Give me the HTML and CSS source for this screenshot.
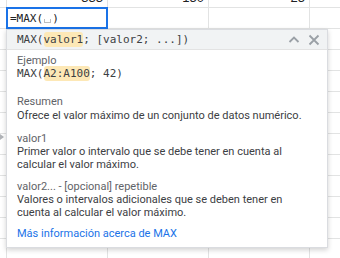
FILE: index.html
```html
<!DOCTYPE html>
<html lang="es">
<head>
<meta charset="utf-8">
<link rel="stylesheet" href="styles.css">
</head>
<body>
<div class="sheet">
  <div class="c"></div><div class="c num">333</div><div class="c num">150</div><div class="c num">25</div><div class="c"></div>
  <div class="c"></div><div class="c"></div><div class="c"></div><div class="c"></div><div class="c"></div>
  <div class="c"></div><div class="c"></div><div class="c"></div><div class="c"></div><div class="c"></div>
  <div class="c"></div><div class="c"></div><div class="c"></div><div class="c"></div><div class="c"></div>
  <div class="c"></div><div class="c"></div><div class="c"></div><div class="c"></div><div class="c"></div>
  <div class="c"></div><div class="c"></div><div class="c"></div><div class="c"></div><div class="c"></div>
  <div class="c"></div><div class="c"></div><div class="c"></div><div class="c"></div><div class="c"></div>
  <div class="c"></div><div class="c"></div><div class="c"></div><div class="c"></div><div class="c"></div>
  <div class="c"></div><div class="c"></div><div class="c"></div><div class="c"></div><div class="c"></div>
  <div class="c"></div><div class="c"></div><div class="c"></div><div class="c"></div><div class="c"></div>
  <div class="c"></div><div class="c"></div><div class="c"></div><div class="c"></div><div class="c"></div>
  <div class="c"></div><div class="c"></div><div class="c"></div><div class="c"></div><div class="c"></div>
  <div class="c"></div><div class="c"></div><div class="c"></div><div class="c"></div><div class="c"></div>
</div>

<div class="editor"><span>=MAX(</span><span class="ph"></span><span>)</span></div>

<span class="pointer"></span>

<div class="popup">
  <div class="head">
    <div class="sig">MAX(<span class="hl">valor1</span>; [valor2; ...])</div>
    <div class="tools">
      <svg class="ico" width="14" height="14" viewBox="0 0 14 14"><path d="M2.5 9 L7 4.5 L11.5 9" fill="none" stroke="#9aa0a6" stroke-width="1.8"/></svg>
      <svg class="ico" width="14" height="14" viewBox="0 0 14 14"><path d="M2.5 2.5 L11.5 11.5 M11.5 2.5 L2.5 11.5" fill="none" stroke="#9aa0a6" stroke-width="1.8"/></svg>
    </div>
  </div>
  <div class="body">
    <div class="sec ex">
      <div class="lbl">Ejemplo</div>
      <div class="code">MAX(<span class="hl">A2:A100</span>; 42)</div>
    </div>
    <div class="sec sum">
      <div class="lbl">Resumen</div>
      <div class="desc">Ofrece el valor máximo de un conjunto de datos numérico.</div>
    </div>
    <div class="sec a1">
      <div class="lbl">valor1</div>
      <div class="desc">Primer valor o intervalo que se debe tener en cuenta al calcular el valor máximo.</div>
    </div>
    <div class="sec a2">
      <div class="lbl">valor2... - [opcional] repetible</div>
      <div class="desc">Valores o intervalos adicionales que se deben tener en cuenta al calcular el valor máximo.</div>
    </div>
    <a class="more" href="#">Más información acerca de MAX</a>
  </div>
</div>
</body>
</html>
```
FILE: styles.css
```css
html, body {
  margin: 0;
  padding: 0;
  background: #fff;
  width: 340px;
  height: 258px;
  overflow: hidden;
  position: relative;
}

.sheet {
  display: grid;
  grid-template-columns: 7px repeat(4, 101px);
  grid-template-rows: 8px repeat(12, 21px);
}

.c {
  box-sizing: border-box;
  border-right: 1px solid #e2e3e3;
  border-bottom: 1px solid #e2e3e3;
  overflow: hidden;
}

.num {
  display: flex;
  align-items: flex-end;
  justify-content: flex-end;
  padding: 0 4px 3px 0;
  font: 13px/13px "Liberation Sans", Arial, sans-serif;
  color: #202124;
}

.editor {
  position: absolute;
  left: 6px;
  top: 7px;
  width: 102px;
  height: 22px;
  box-sizing: border-box;
  border: 2px solid #1a73e8;
  background: #fff;
  display: flex;
  align-items: center;
  padding-left: 2px;
  font: 11px "DejaVu Sans Mono", monospace;
  color: #202124;
}

.ph {
  display: inline-block;
  width: 5px;
  height: 3px;
  margin: 5px 1px 0 1px;
  border: 1px solid #bdbdbd;
  border-top: none;
}

.pointer {
  position: absolute;
  left: 0;
  top: 134px;
  width: 0;
  height: 0;
  border-top: 3px solid transparent;
  border-bottom: 3px solid transparent;
  border-left: 4px solid #b0b3b7;
}

.popup {
  position: absolute;
  left: 6px;
  top: 29px;
  width: 322px;
  box-sizing: border-box;
  border: 1px solid #dadce0;
  background: #fff;
  box-shadow: 0 2px 5px rgba(0, 0, 0, 0.18);
  font-family: Roboto, "Liberation Sans", sans-serif;
}

.head {
  height: 19px;
  background: #f1f3f4;
  border-bottom: 1px solid #e3e3e3;
  display: flex;
  align-items: center;
  justify-content: space-between;
  padding: 0 6px 0 10px;
}

.sig, .code {
  font: 11px/14px "DejaVu Sans Mono", monospace;
  color: #3c4043;
  white-space: nowrap;
}

.hl {
  background: #fde8b6;
  border-radius: 3px;
  padding: 1px 0;
}

.tools {
  display: flex;
  gap: 6px;
  align-items: center;
}

.ico {
  display: block;
}

.body {
  padding: 4px 10px 7px 10px;
  font-size: 11px;
  line-height: 13.3px;
}

.lbl {
  color: #5f6368;
}

.desc {
  color: #3c4043;
}

.sec.ex { margin-bottom: 14px; }
.sec.sum { margin-bottom: 10px; }
.sec.a1 { margin-bottom: 8px; }
.sec.a2 { margin-bottom: 7px; }

.more {
  display: block;
  color: #1a73e8;
  text-decoration: none;
}
```
